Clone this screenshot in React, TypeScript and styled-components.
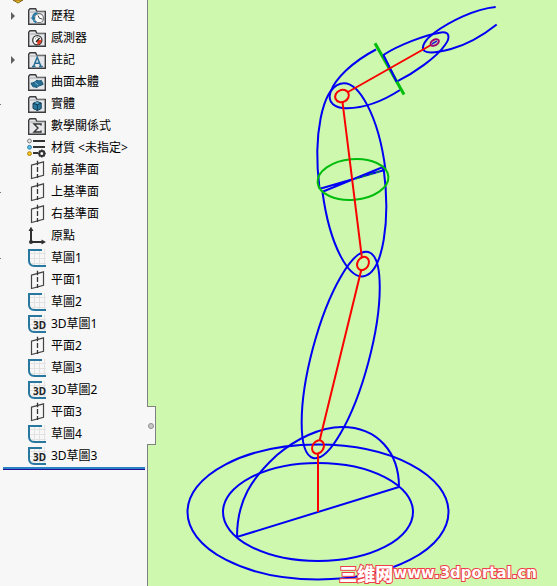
import React from "react";
import styled, { createGlobalStyle } from "styled-components";

const GlobalStyle = createGlobalStyle`
  *, *::before, *::after { box-sizing: border-box; }
  body {
    margin: 0;
    background: #cef8ad;
    font-family: "Noto Sans", "Noto Sans CJK TC", sans-serif;
    color: #000;
  }
`;

const Workspace = styled.div`
  display: flex;
  min-height: 100vh;
  overflow: hidden;
`;

const Sidebar = styled.aside`
  position: relative;
  z-index: 1;
  flex: 0 0 148px;
  background: #f7f7f7;
  border-right: 1px solid #808080;
`;

const PartMark = styled.svg`
  display: block;
  width: 12px;
  height: 5px;
  margin-left: 12px;
`;

const Tree = styled.ul`
  list-style: none;
  margin: 0;
  padding: 0;
`;

const Row = styled.li`
  display: grid;
  grid-template-columns: 27px 20px 1fr;
  align-items: center;
  height: 22px;
`;

const Expander = styled.button`
  display: flex;
  align-items: center;
  width: 16px;
  height: 16px;
  margin: 0;
  padding: 0 0 0 10px;
  border: 0;
  background: none;
  cursor: pointer;
`;

const Tick = styled.span`
  width: 1px;
  height: 1px;
  background: #777;
`;

const Icon = styled.svg`
  display: block;
  width: 20px;
  height: 20px;
`;

const Label = styled.span`
  padding-left: 4px;
  font-size: 12px;
  line-height: 20px;
  white-space: nowrap;
`;

const RollbackBar = styled.div`
  height: 3px;
  margin: 0 2px 0 3px;
  background: #2b83c6;
  border-bottom: 1px solid #20109a;
`;

const CollapseHandle = styled.button`
  position: absolute;
  top: 406px;
  left: 100%;
  display: flex;
  align-items: center;
  justify-content: flex-start;
  width: 9px;
  height: 39px;
  padding: 0;
  border: 1px solid #808080;
  border-left: 0;
  background: #f7f7f7;
  cursor: pointer;

  &::before {
    content: "";
    width: 6px;
    height: 6px;
    margin-left: 1px;
    border: 1px solid #8c8c8c;
    border-radius: 50%;
    background: #c8c8c8;
  }
`;

const Canvas = styled.main`
  position: relative;
  flex: 1;
  min-width: 0;
  background: #cef8ad;
`;

const Sketch = styled.svg`
  display: block;
  width: 409px;
  height: 586px;
  fill: none;
  stroke-width: 2;
`;

const Watermark = styled.span`
  position: absolute;
  right: 20px;
  bottom: 2px;
  display: flex;
  align-items: center;
  font-family: "DejaVu Sans", sans-serif;
  font-size: 15px;
  font-weight: 700;
  line-height: 22px;
  color: #fff;
  -webkit-text-stroke: 2px #f03c46;
  paint-order: stroke fill;
  white-space: nowrap;
`;

const WatermarkName = styled.b`
  font-family: "Noto Sans CJK SC", sans-serif;
  font-size: 18px;
`;

type Kind =
  | "history" | "sensor" | "note" | "surface" | "solid" | "equation"
  | "material" | "plane" | "origin" | "sketch" | "sketch3d";

const Folder = () => (
  <>
    <path d="M1.7 18.3V4.2L3 2.8h5.6l1.2 2.6h8.5v12.9z" fill="#e6e7ea" stroke="#3c3c3e" strokeWidth="1.4" />
    <path d="M2.5 6h15" stroke="#a8a9ad" />
  </>
);

const Glyph = ({ kind }: { kind: Kind }) => {
  switch (kind) {
    case "history":
      return (
        <>
          <Folder />
          <circle cx="12" cy="12.2" r="4.5" fill="#fff" stroke="#77797c" strokeWidth="1.2" />
          <path d="M11 9.5l1.4 2.8 3 .8" fill="none" stroke="#444" />
          <path d="M10.5 7.3C7.5 7.3 6 9.5 6 12" fill="none" stroke="#2479a6" strokeWidth="2" />
          <path d="M3.6 11.6h5L6.6 15z" fill="#2479a6" />
          <path d="M6.5 15l3 1.5" stroke="#2479a6" strokeWidth="1.5" />
        </>
      );
    case "sensor":
      return (
        <>
          <Folder />
          <circle cx="10.3" cy="12.2" r="4.6" fill="#fff" stroke="#333" strokeWidth="1.3" />
          <path d="M10.8 12.8l3.4-.6c0 2.2-1.2 3.7-3.4 4z" fill="#e23b22" stroke="#e23b22" />
          <path d="M9 14l3.6-4" stroke="#222" strokeWidth="1.4" />
          <path d="M8 10.5l.8.5M10.2 9v1" stroke="#666" />
        </>
      );
    case "note":
      return (
        <>
          <Folder />
          <path d="M6.6 16.3l3.6-9 3.7 9M8 13.3h4.6M5 16.4h3.5M12 16.4h3.8" fill="none" stroke="#286f97" strokeWidth="1.5" />
        </>
      );
    case "surface":
      return (
        <>
          <Folder />
          <path d="M4 11.2c2.7-.3 4-1.4 6-3 1.8 1 3.3.5 4.2.1l2 4c-2.4 1.5-4.4.7-6.3 3.4-2-1.2-3-.5-4-1z" fill="#286f97" stroke="#16516f" />
          <path d="M8 10.6l3 2.4" stroke="#79bddc" />
        </>
      );
    case "solid":
      return (
        <>
          <Folder />
          <path d="M6 9.3L10.3 7.6 14.2 9v5.6l-3.8 2L6 14.4z" fill="#28789f" stroke="#123c55" />
          <path d="M6 9.3l4.4 1.5L14.2 9M10.4 10.8v5.8" fill="none" stroke="#123c55" />
          <path d="M7.6 9.1l2.7-1 2.3.9-2.3.8z" fill="#63b2d5" />
        </>
      );
    case "equation":
      return (
        <>
          <Folder />
          <path d="M14 9.5V8H7l4 4-4 4h7v-1.6" fill="none" stroke="#333" strokeWidth="1.4" />
        </>
      );
    case "material":
      return (
        <>
          <circle cx="2.5" cy="3" r="1.9" fill="#eee" stroke="#777" />
          <circle cx="2.5" cy="9.3" r="1.9" fill="#5fc0ec" stroke="#287da6" />
          <circle cx="2.5" cy="15.6" r="1.9" fill="#ffca1c" stroke="#a77b00" />
          <path d="M6 3h12M6 9h12M6 15h5" stroke="#333" strokeWidth="2" />
          <circle cx="14.8" cy="15.5" r="2.5" fill="none" stroke="#333" strokeWidth="2" />
          <path d="M14.8 11.5v2M14.8 17.5v2M10.8 15.5h2M16.8 15.5h2M12 12.7l1.2 1.2M16.4 17.1l1.2 1.2M12 18.3l1.2-1.2M16.4 13.9l1.2-1.2" stroke="#333" strokeWidth="1.6" />
        </>
      );
    case "plane":
      return (
        <>
          <path d="M4.5 5.2L16.5 1.8v13.5l-12 3.2z" fill="none" stroke="#444" strokeWidth="1.2" />
          <path d="M10.5 .8v4.5M10.5 7v5M10.5 14v4" stroke="#333" strokeWidth="1.3" />
        </>
      );
    case "origin":
      return (
        <>
          <path d="M4 16V4M4 16h12" stroke="#303030" strokeWidth="2" />
          <path d="M1.5 5L4 .8 6.5 5zM14.5 13.5L19 16l-4.5 2.5z" fill="#303030" />
          <circle cx="4" cy="16" r="2" fill="#303030" />
        </>
      );
    default:
      return (
        <>
          <path d="M7.5 1v17M12.5 1v17M17.5 1v17M2 5.5h17M2 10.5h17M2 15.5h17" stroke="#e2e2e2" />
          <path d="M15 2H2v10.5Q2 18 7.5 18H19" fill="none" stroke="#27779f" strokeWidth="2" />
          {kind === "sketch3d" && (
            <text x="6" y="15" fontFamily="Noto Sans, sans-serif" fontSize="10" fontWeight="700" fill="#222">3D</text>
          )}
        </>
      );
  }
};

type Item = { label: string; kind: Kind; expandable?: boolean; tick?: boolean };

const items: Item[] = [
  { label: "歷程", kind: "history", expandable: true },
  { label: "感測器", kind: "sensor" },
  { label: "註記", kind: "note", expandable: true },
  { label: "曲面本體", kind: "surface" },
  { label: "實體", kind: "solid", tick: true },
  { label: "數學關係式", kind: "equation" },
  { label: "材質 <未指定>", kind: "material" },
  { label: "前基準面", kind: "plane" },
  { label: "上基準面", kind: "plane", tick: true },
  { label: "右基準面", kind: "plane" },
  { label: "原點", kind: "origin" },
  { label: "草圖1", kind: "sketch", tick: true },
  { label: "平面1", kind: "plane" },
  { label: "草圖2", kind: "sketch" },
  { label: "3D草圖1", kind: "sketch3d" },
  { label: "平面2", kind: "plane" },
  { label: "草圖3", kind: "sketch" },
  { label: "3D草圖2", kind: "sketch3d" },
  { label: "平面3", kind: "plane" },
  { label: "草圖4", kind: "sketch" },
  { label: "3D草圖3", kind: "sketch3d" },
];

const Gutter = ({ item }: { item: Item }) => {
  if (item.expandable) {
    return (
      <Expander type="button" aria-label={item.label} aria-expanded={false}>
        <svg width="6" height="8" viewBox="0 0 6 8"><path d="M1 0l4 4-4 4z" fill="#606060" /></svg>
      </Expander>
    );
  }
  return item.tick ? <Tick /> : <span />;
};

const LampSketch = () => (
  <Sketch viewBox="148 0 409 586" aria-hidden="true">
    <g stroke="#0000f5">
      <ellipse cx="318" cy="512" rx="130.5" ry="67.5" />
      <ellipse cx="318" cy="512" rx="95" ry="49" />
      <path d="M237 537C237 500 252 478 277 455C296 439 320 427 342 427C378 427 399 453 399 487Z" />
      <ellipse cx="340.7" cy="355" rx="28.6" ry="106.6" transform="rotate(15 340.7 355)" />
      <path d="M319.5 188.5A33.5 95.5 -6 0 1 385.5 170" />
      <path d="M383.7 169A31 94 -6 0 1 322.5 192" />
      <path d="M320 188.7L383.7 170.3M322.5 191.7L383 167V171" />
      <path d="M376 49.5C352 62 335 79 330.5 92C327 103 335 108.5 347 108.3C364 108 383 101 400 90" />
      <path d="M383.3 55C399 45 425 35 441 32.5C449 31.5 451 37 445 45C437 57 414 73 396.7 81.7Z" />
      <path d="M495.7 7C474 9 449 22 434 33C426 39 420 47 424.5 51C429 54 440 52 451 49C469 44 486 33 496.7 24.5" />
    </g>
    <ellipse cx="353" cy="179.5" rx="35.5" ry="20.3" transform="rotate(-5 353 179.5)" stroke="#00bd0d" />
    <path d="M356 179L381 171" stroke="#00a51c" strokeWidth="1" strokeDasharray="4 3" />
    <path d="M375 43.3L404 94.5" stroke="#00bd0d" strokeWidth="3" />
    <path d="M383.3 55L396.7 81.7" stroke="#0000f5" />
    <g stroke="#fa0000">
      <path d="M318 512V453M319.5 441L361.5 269M361.8 257L342.5 102M348 92L431 45" />
      <ellipse cx="318" cy="447" rx="5.5" ry="7" transform="rotate(32 318 447)" />
      <ellipse cx="363" cy="263.5" rx="5.5" ry="7" transform="rotate(32 363 263.5)" />
      <ellipse cx="342" cy="96" rx="7" ry="6" transform="rotate(-25 342 96)" />
    </g>
    <ellipse cx="434.7" cy="42.5" rx="4.5" ry="2.8" transform="rotate(-30 434.7 42.5)" stroke="#a00070" />
    <path d="M432 44L437 41" stroke="#2020d0" strokeWidth="1.5" />
  </Sketch>
);

export default function App() {
  return (
    <>
      <GlobalStyle />
      <Workspace>
        <Sidebar>
          <PartMark viewBox="0 0 12 5" aria-hidden="true">
            <path d="M1 0h10L6 3z" fill="#f3bd22" stroke="#80631b" />
          </PartMark>
          <Tree>
            {items.map((item) => (
              <Row key={item.label}>
                <Gutter item={item} />
                <Icon viewBox="0 0 20 20" aria-hidden="true"><Glyph kind={item.kind} /></Icon>
                <Label>{item.label}</Label>
              </Row>
            ))}
          </Tree>
          <RollbackBar />
          <CollapseHandle type="button" aria-label="Collapse panel" />
        </Sidebar>
        <Canvas>
          <LampSketch />
          <Watermark><WatermarkName>三维网</WatermarkName>www.3dportal.cn</Watermark>
        </Canvas>
      </Workspace>
    </>
  );
}
